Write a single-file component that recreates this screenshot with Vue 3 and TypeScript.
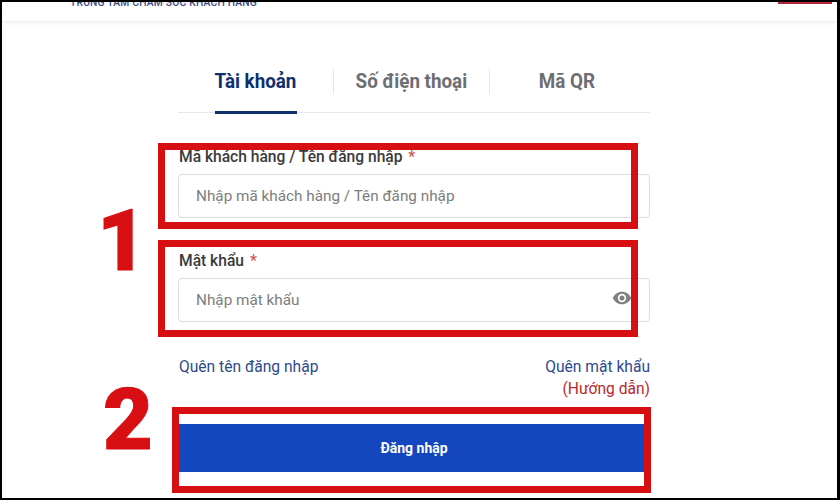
<script setup lang="ts">
const tabs = [
  { label: 'Tài khoản', active: true },
  { label: 'Số điện thoại', active: false },
  { label: 'Mã QR', active: false },
]
</script>

<template>
  <div class="frame">
    <div class="page">
      <header class="top">
        <span class="brand">TRUNG TÂM CHĂM SÓC KHÁCH HÀNG</span>
        <span class="corner"></span>
      </header>
      <main class="form">
        <nav class="tabs">
          <div v-for="t in tabs" :key="t.label" class="tab" :class="{ active: t.active }">
            <span class="tab-text">{{ t.label }}</span>
          </div>
        </nav>
        <div class="field first">
          <label>Mã khách hàng / Tên đăng nhập <i>*</i></label>
          <div class="input">Nhập mã khách hàng / Tên đăng nhập</div>
        </div>
        <div class="field second">
          <label>Mật khẩu <i>*</i></label>
          <div class="input">
            Nhập mật khẩu
            <svg class="eye" viewBox="0 0 24 24" width="20" height="20">
              <path fill="#808080" d="M12 4.5C7 4.5 2.7 7.6 1 12c1.7 4.4 6 7.5 11 7.5s9.3-3.1 11-7.5c-1.7-4.4-6-7.5-11-7.5zM12 17a5 5 0 1 1 0-10 5 5 0 0 1 0 10zm0-8a3 3 0 1 0 0 6 3 3 0 0 0 0-6z"/>
            </svg>
          </div>
        </div>
        <div class="links">
          <a class="link">Quên tên đăng nhập</a>
          <div class="right">
            <a class="link">Quên mật khẩu</a>
            <a class="guide">(Hướng dẫn)</a>
          </div>
        </div>
        <button class="submit">Đăng nhập</button>
      </main>
    </div>
    <div class="box b1"></div>
    <div class="box b2"></div>
    <div class="box b3"></div>
    <span class="num n1">1</span>
    <span class="num n2">2</span>
  </div>
</template>

<style>
html, body { margin: 0; background: #000; }
</style>

<style scoped>
.frame {
  position: relative;
  width: 840px;
  height: 500px;
  overflow: hidden;
  background: #000;
  box-sizing: border-box;
  padding: 2px 3px 2px 2px;
  font-family: Roboto, "Liberation Sans", sans-serif;
}
.page {
  background: #fff;
  height: 100%;
  overflow: hidden;
}
.top {
  height: 19px;
  position: relative;
  box-shadow: 0 1px 4px rgba(0, 0, 0, 0.1);
  display: flex;
  justify-content: space-between;
}
.brand {
  margin: -5px 0 0 68px;
  font-size: 10.3px;
  font-weight: 500;
  color: #3b4a86;
  line-height: 12px;
  letter-spacing: 0.2px;
}
.corner {
  width: 54px;
  height: 2px;
  margin-right: 5px;
  background: #b02a3c;
}
.form {
  width: 472px;
  margin: 0 0 0 176px;
}
.tabs {
  display: flex;
  height: 92px;
  box-sizing: border-box;
  padding-top: 40px;
  border-bottom: 1px solid #e8e8e8;
}
.tab {
  flex: 0 0 auto;
  height: 52px;
  box-sizing: border-box;
  text-align: center;
  color: #6d6e72;
  font-size: 20px;
  font-weight: 700;
  line-height: 40px;
  position: relative;
  width: 156px;
}
.tab:first-child {
  width: 155px;
}
.tab + .tab::before {
  content: "";
  position: absolute;
  left: 0;
  top: 8px;
  height: 25px;
  width: 1px;
  background: #e6e6e6;
}
.tab-text {
  display: inline-block;
  transform: scaleX(0.94);
}
.tab.active {
  color: #0f2f6e;
}
.tab.active::after {
  content: "";
  position: absolute;
  left: 37px;
  width: 82px;
  bottom: -1px;
  height: 3px;
  background: #0f2f6e;
}
.field label {
  display: block;
  padding-left: 1px;
  font-size: 15.6px;
  font-weight: 500;
  color: #3a3a3a;
  line-height: 20px;
}
.field label i {
  font-style: normal;
  color: #d9534f;
  margin-left: 2px;
}
.first { margin-top: 34px; }
.second { margin-top: 33px; }
.input {
  position: relative;
  margin-top: 7px;
  height: 44px;
  box-sizing: border-box;
  border: 1px solid #dcdcdc;
  border-radius: 4px;
  padding-left: 17px;
  line-height: 42px;
  font-size: 15.3px;
  color: #7d7d7d;
}
.eye {
  position: absolute;
  right: 17px;
  top: 9px;
}
.links {
  margin-top: 34px;
  padding-left: 1px;
  display: flex;
  justify-content: space-between;
  font-size: 15.6px;
  line-height: 22px;
}
.link { color: #2c4a8c; display: block; }
.right { text-align: right; }
.guide { color: #b8282e; display: block; }
.submit {
  display: block;
  width: 472px;
  height: 48px;
  margin-top: 24px;
  border: 0;
  background: #1446bd;
  color: #fff;
  font: 700 14px Roboto, "Liberation Sans", sans-serif;
}
.box {
  position: absolute;
  box-sizing: border-box;
  border: 7px solid #d80f12;
}
.b1 { left: 158px; top: 143px; width: 480px; height: 86px; }
.b2 { left: 158px; top: 240px; width: 480px; height: 97px; }
.b3 { left: 172px; top: 407px; width: 479px; height: 86px; }
.num {
  position: absolute;
  color: #d80f12;
  font-family: Roboto, "Liberation Sans", sans-serif;
  font-weight: 900;
  font-size: 86px;
  line-height: 88px;
  -webkit-text-stroke: 1px #d80f12;
}
.n1 { left: 97px; top: 197px; }
.n2 { left: 103px; top: 376px; }
</style>
